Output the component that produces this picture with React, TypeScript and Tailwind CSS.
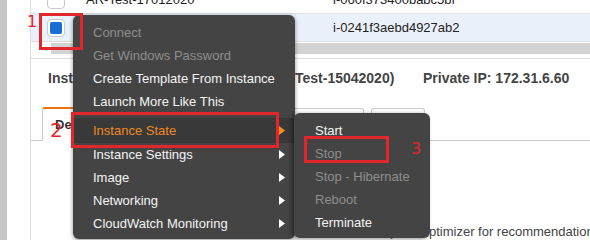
import React from "react";

const mainItems = [
  { label: "Connect", disabled: true },
  { label: "Get Windows Password", disabled: true },
  { label: "Create Template From Instance" },
  { label: "Launch More Like This" },
  { label: "sep" },
  { label: "Instance State", sub: true, active: true },
  { label: "Instance Settings", sub: true },
  { label: "Image", sub: true },
  { label: "Networking", sub: true },
  { label: "CloudWatch Monitoring", sub: true },
];

const stateItems = [
  { label: "Start" },
  { label: "Stop", disabled: true },
  { label: "Stop - Hibernate", disabled: true },
  { label: "Reboot", disabled: true },
  { label: "Terminate" },
];

const Caret = ({ color }: { color: string }) => (
  <svg width="6" height="9" viewBox="0 0 6 9">
    <polygon points="0,0 6,4.5 0,9" fill={color} />
  </svg>
);

const Checkbox = ({ checked }: { checked?: boolean }) => (
  <div className="ml-[16px] h-[18px] w-[18px] rounded-[4px] border border-[#c9c9c9] bg-white p-[2px]">
    {checked && <div className="h-full w-full rounded-[2px] bg-[#1b6fd4]" />}
  </div>
);

const App = () => {
  return (
    <div className="relative flex h-[240px] w-[590px] overflow-hidden bg-white font-['Liberation_Sans',Arial,sans-serif] text-[13px] text-[#222]">
      <div className="w-[7px] shrink-0 bg-[#c6c6c6]" />
      <div className="w-[23px] shrink-0" />

      {/* Instances panel */}
      <div className="min-w-0 flex-1 border-l border-[#dedede]">
        <div className="-mt-[14px] flex h-[28px] items-center border-b border-[#e2e2e2]">
          <div className="w-[55px] shrink-0">
            <Checkbox />
          </div>
          <div className="w-[247px] shrink-0 whitespace-nowrap">AR-Test-17012020</div>
          <div className="whitespace-nowrap">i-060f373400babc5bf</div>
        </div>
        <div className="flex h-[28px] items-center border-b border-[#dcdcdc] bg-[#eaf1fb]">
          <div className="w-[55px] shrink-0">
            <Checkbox checked />
          </div>
          <div className="w-[247px] shrink-0 whitespace-nowrap">AR-Test-15042020</div>
          <div className="whitespace-nowrap">i-0241f3aebd4927ab2</div>
        </div>
        <div className="h-[16px] border-b border-[#dcdcdc]">
          <div className="mt-[1px] flex h-[11px] items-center">
            <span className="ml-[12px] w-[8px] text-[8px] leading-none text-[#999]">◂</span>
            <div className="h-[11px] flex-1 bg-[#d3d3d3]" />
          </div>
        </div>

        {/* Details */}
        <div className="flex h-[38px] items-center whitespace-nowrap pl-[17px] text-[14px] font-bold text-[#444]">
          <div className="flex w-[375px] shrink-0 gap-[12px]">
            <span>Instance: i-0241f3aebd4927ab2</span>
            <span>(AR-Test-15042020)</span>
          </div>
          <span>Private IP: 172.31.6.60</span>
        </div>

        <div className="mt-[10px] flex h-[34px] items-end gap-[7px] border-b border-[#cccccc] pl-[11px] text-[13px] text-[#444]">
          <div className="-mb-px flex h-[34px] w-[118px] items-center rounded-t-[3px] border border-t-2 border-[#cccccc] border-t-[#ec7211] border-b-white bg-white pl-[12px] font-bold text-[#333]">
            Description
          </div>
          <div className="flex h-[32px] w-[116px] items-center justify-center rounded-t-[3px] border border-b-0 border-[#cccccc]">
            Status Checks
          </div>
          <div className="flex h-[32px] w-[74px] items-center justify-center rounded-t-[3px] border border-b-0 border-[#cccccc]">
            Monitoring
          </div>
          <div className="flex h-[32px] w-[54px] items-center justify-center rounded-t-[3px] border border-b-0 border-[#cccccc]">
            Tags
          </div>
        </div>

        <div className="mt-[83px] whitespace-nowrap pl-[246px] leading-[16px] text-[#444]">
          Opt-in to AWS Compute Optimizer for recommendations.
        </div>
      </div>

      {/* Actions context menu */}
      <div className="absolute left-[73px] top-[15px] w-[222px] rounded-[6px] bg-[#444444] pb-[4px] pt-[6px] text-[13px] shadow-[0_1px_4px_rgba(0,0,0,0.45)]">
        {mainItems.map((item, i) =>
          item.label === "sep" ? (
            <div key={i} className="h-[5px]" />
          ) : (
            <div
              key={i}
              className={`flex items-center justify-between whitespace-nowrap pl-[20px] pr-[10px] ${
                item.active ? "h-[25px] bg-[#393939] text-[#ee8a1d]" : "h-[23px]"
              } ${item.disabled ? "text-[#8e8e8e]" : item.active ? "" : "text-[#f4f4f4]"}`}
            >
              <span>{item.label}</span>
              {item.sub && <Caret color={item.active ? "#f0901f" : "#ffffff"} />}
            </div>
          )
        )}

        {/* Instance State submenu */}
        <div className="absolute left-[221px] top-[98px] w-[136px] rounded-[6px] bg-[#444444] pb-[4px] pt-[6px] shadow-[-2px_1px_4px_rgba(0,0,0,0.45)]">
          {stateItems.map((item) => (
            <div
              key={item.label}
              className={`flex h-[23px] items-center whitespace-nowrap pl-[21px] ${
                item.disabled ? "text-[#8e8e8e]" : "text-[#f4f4f4]"
              }`}
            >
              {item.label}
            </div>
          ))}
        </div>
      </div>

      {/* Annotations */}
      <div className="absolute left-[39px] top-[13px] h-[37px] w-[44px] border-[3px] border-[#e2262b]" />
      <div className="absolute left-[71px] top-[112px] h-[36px] w-[208px] border-[3px] border-[#e2262b]" />
      <div className="absolute left-[304px] top-[136px] h-[27px] w-[85px] border-[3px] border-[#e2262b]" />
      <span className="absolute left-[27px] top-[13px] font-['DejaVu_Sans',sans-serif] text-[16px] leading-[18px] text-[#e2262b]">
        1
      </span>
      <span className="absolute left-[50px] top-[119px] font-['DejaVu_Sans',sans-serif] text-[20px] leading-[22px] text-[#e2262b]">
        2
      </span>
      <span className="absolute left-[411px] top-[140px] font-['DejaVu_Sans',sans-serif] text-[16px] leading-[18px] text-[#e2262b]">
        3
      </span>
    </div>
  );
};

export default App;
